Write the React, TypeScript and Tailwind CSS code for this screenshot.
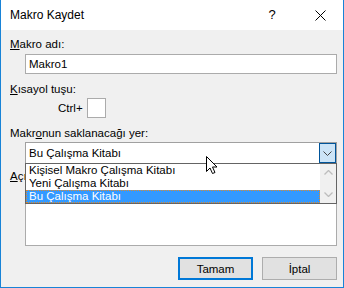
import React from 'react';

function Cursor() {
  return (
    <svg width="13" height="20" viewBox="0 0 13 20" className="absolute left-[204px] top-[155px]">
      <path
        d="M1.5 1.5 L1.5 16.5 L5 13 L7.5 18.5 L10 17.5 L7.5 12 L12 12 Z"
        fill="#fff"
        stroke="#000"
        strokeWidth="1"
        strokeLinejoin="miter"
      />
    </svg>
  );
}

export default function App() {
  return (
    <div
      className="relative w-[344px] h-[288px] bg-[#f0f0f0] border-x border-b border-[#1883d7] flex flex-col text-[11.5px] leading-[16px] text-black"
      style={{ fontFamily: '"Liberation Sans", Arial, sans-serif' }}
    >
      {/* title bar */}
      <div className="h-[30px] bg-white flex items-center shrink-0">
        <span className="ml-[9px] flex-1 text-[12px]">Makro Kaydet</span>
        <span className="w-[8px] text-center mr-[39px] text-[13px]">?</span>
        <svg width="11" height="11" viewBox="0 0 11 11" className="mr-[17px]">
          <path d="M0.5 0.5 L10.5 10.5 M10.5 0.5 L0.5 10.5" stroke="#000" strokeWidth="1" />
        </svg>
      </div>

      {/* body */}
      <div className="flex flex-col pl-[9px] pr-[6px]">
        <div className="mt-[6px] h-[16px]">
          <span className="underline">M</span>akro adı:
        </div>
        <div className="ml-[15px] mt-[2px] h-[20px] bg-white border border-[#ababab] flex items-center pl-[3px]">
          Makro1
        </div>

        <div className="mt-[7px] h-[16px]">
          <span className="underline">K</span>ısayol tuşu:
        </div>
        <div className="mt-[1px] flex items-center h-[20px]">
          <span className="ml-[48px] w-[29px]">Ctrl+</span>
          <div className="w-[19px] h-[20px] bg-white border border-[#ababab]" />
        </div>

        <div className="mt-[7px] h-[16px]">
          Makr<span className="underline">o</span>nun saklanacağı yer:
        </div>
        <div className="ml-[15px] mt-[1px] h-[22px] bg-white border border-[#a0a0a0] flex items-center">
          <span className="flex-1 pl-[3px]">Bu Çalışma Kitabı</span>
          <div className="w-[17px] h-[20px] bg-[#cce4f7] border border-[#005499] flex items-center justify-center">
            <svg width="9" height="5" viewBox="0 0 9 5">
              <path d="M0.5 0.5 L4.5 4.5 L8.5 0.5" stroke="#444" strokeWidth="1" fill="none" />
            </svg>
          </div>
        </div>

        {/* label sits under the open list, as in the screenshot */}
        <div className="mt-[4px] h-[16px]">
          <span className="underline">A</span>çıklama:
        </div>
        <div className="ml-[15px] mt-[3px] h-[59px] bg-white border border-[#ababab]" />

        <div className="mt-[11px] flex justify-end gap-[9px]">
          <button className="w-[75px] h-[23px] bg-[#e1e1e1] border-2 border-[#0078d7] flex items-center justify-center">
            Tamam
          </button>
          <button className="w-[75px] h-[23px] bg-[#e1e1e1] border border-[#adadad] flex items-center justify-center">
            İptal
          </button>
        </div>
      </div>

      {/* open dropdown list */}
      <div className="absolute left-[24px] top-[163px] w-[312px] h-[41px] bg-white border border-[#646464] flex">
        <div className="flex-1 flex flex-col leading-[13px]">
          <div className="h-[13px] pl-[3px]">Kişisel Makro Çalışma Kitabı</div>
          <div className="h-[13px] pl-[3px]">Yeni Çalışma Kitabı</div>
          <div className="h-[13px] pl-[2px] bg-[#3399ff] text-white border border-dotted border-[#e08a2a] leading-[11px]">
            Bu Çalışma Kitabı
          </div>
        </div>
        <div className="w-[16px] bg-[#f0f0f0] flex flex-col items-center justify-between py-[6px]">
          <svg width="9" height="5" viewBox="0 0 9 5">
            <path d="M0.5 4.5 L4.5 0.5 L8.5 4.5" stroke="#bdbdbd" strokeWidth="1.3" fill="none" />
          </svg>
          <svg width="9" height="5" viewBox="0 0 9 5">
            <path d="M0.5 0.5 L4.5 4.5 L8.5 0.5" stroke="#bdbdbd" strokeWidth="1.3" fill="none" />
          </svg>
        </div>
      </div>

      <Cursor />
    </div>
  );
}
